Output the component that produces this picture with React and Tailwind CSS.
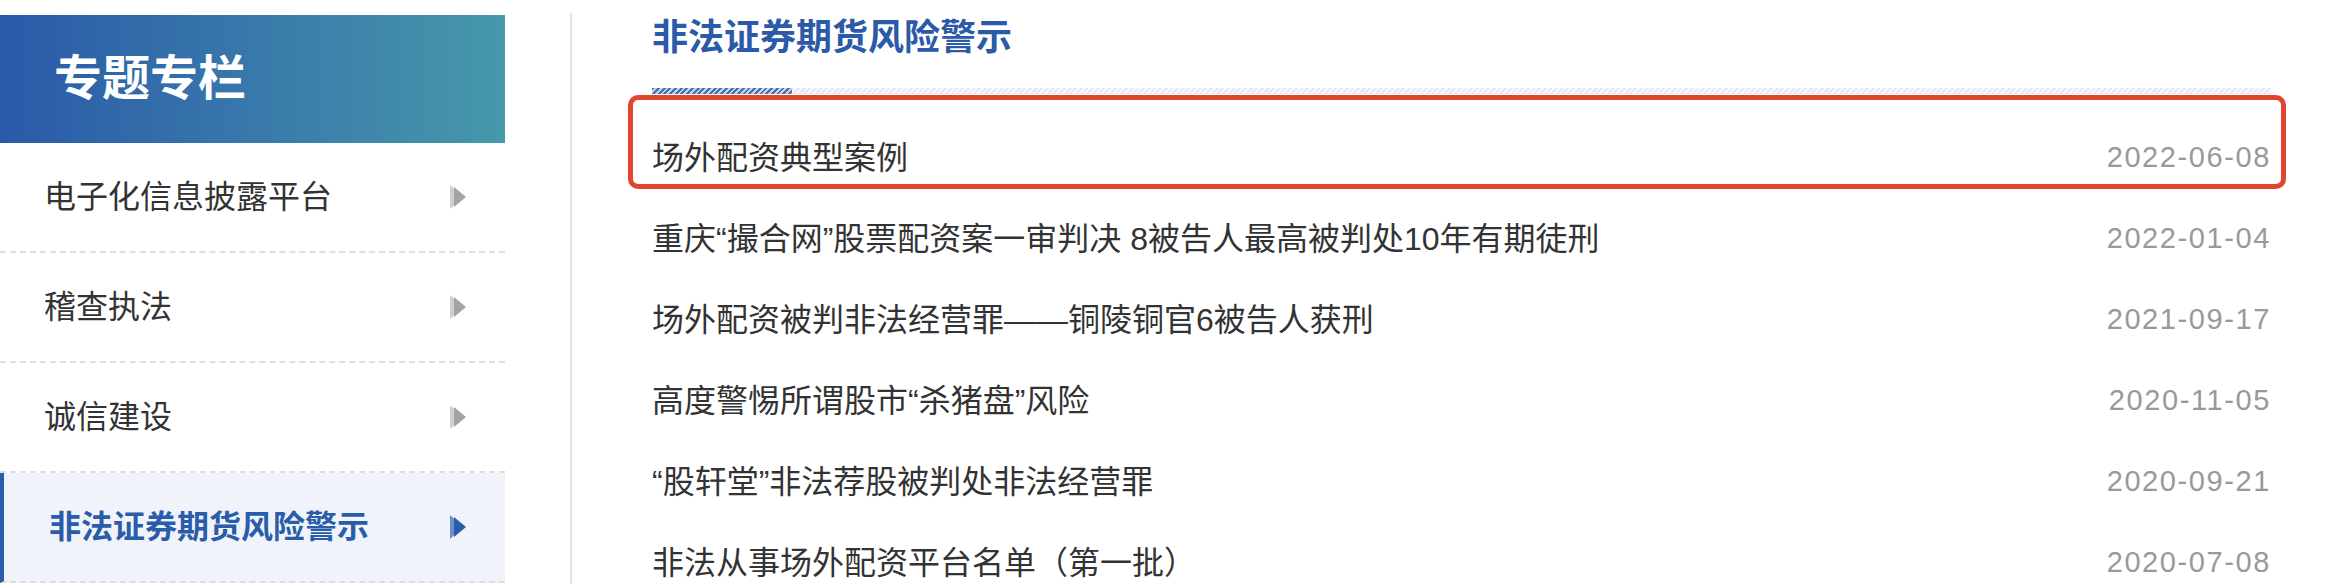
import React from "react";

const FONT = { fontFamily: '"Liberation Sans","Noto Sans CJK SC",sans-serif' };

function Arrow({ active }) {
  const light = active ? "#6a8fcc" : "#cfcfcf";
  const dark = active ? "#2a5caa" : "#a3a3a3";
  return (
    <svg width="16" height="24" viewBox="0 0 16 24" className="shrink-0">
      <polygon points="0,0 13,12 0,24" fill={light} />
      <polygon points="4,2 16,12 4,22" fill={dark} />
    </svg>
  );
}

const menu = [
  { label: "电子化信息披露平台" },
  { label: "稽查执法" },
  { label: "诚信建设" },
  { label: "非法证券期货风险警示", active: true },
];

const rows = [
  ["场外配资典型案例", "2022-06-08"],
  ["重庆“撮合网”股票配资案一审判决 8被告人最高被判处10年有期徒刑", "2022-01-04"],
  ["场外配资被判非法经营罪——铜陵铜官6被告人获刑", "2021-09-17"],
  ["高度警惕所谓股市“杀猪盘”风险", "2020-11-05"],
  ["“股轩堂”非法荐股被判处非法经营罪", "2020-09-21"],
  ["非法从事场外配资平台名单（第一批）", "2020-07-08"],
];

export default function App() {
  return (
    <div className="flex h-[584px] w-[2328px] overflow-hidden bg-white" style={FONT}>
      {/* Left column */}
      <div className="w-[505px] shrink-0 pt-[15px]">
        <div className="flex h-[128px] items-center bg-[linear-gradient(90deg,#2a59a9,#4698ab)] pl-[54px]">
          <span className="text-[48px] font-bold leading-none text-white">专题专栏</span>
        </div>
        {menu.map((m) => (
          <div
            key={m.label}
            className={
              m.active
                ? "flex h-[110px] items-center justify-between border-b-2 border-l-4 border-dashed border-b-[#dedede] border-l-[#2a5caa] bg-[#f0f4fa] pl-[45px] pr-[39px]"
                : "flex h-[110px] items-center justify-between border-b-2 border-dashed border-[#dedede] pl-[44px] pr-[39px]"
            }
            style={m.active ? { borderLeftStyle: "solid" } : undefined}
          >
            <span
              className={
                m.active
                  ? "text-[32px] font-bold leading-none text-[#2a5caa]"
                  : "text-[32px] leading-none text-[#333333]"
              }
            >
              {m.label}
            </span>
            <Arrow active={m.active} />
          </div>
        ))}
      </div>

      {/* Divider */}
      <div className="ml-[65px] mt-[13px] w-[2px] shrink-0 bg-[#e3e3e3]" />

      {/* Content */}
      <div className="flex-1 pl-[80px] pr-[57px] pt-[20px]">
        <h2 className="h-[36px] text-[36px] font-bold leading-none text-[#2a5aa8]">非法证券期货风险警示</h2>
        <div className="mt-[32px] flex h-[6px]">
          <div className="w-[140px] bg-[repeating-linear-gradient(135deg,#4a6fae_0_2px,#c4d1e6_2px_4px)]" />
          <div className="flex-1 bg-[repeating-linear-gradient(135deg,#e3e9f2_0_2px,#f7f9fc_2px_4px)]" />
        </div>
        <div className="mt-[23px]">
          {rows.map(([t, d], i) => (
            <div key={i} className="relative flex h-[81px] items-center justify-between">
              <span className="text-[32px] leading-none text-[#333333]">{t}</span>
              <span className="text-[29px] leading-none tracking-[1.6px] text-[#999999]" style={{ fontFamily: '"Liberation Sans",sans-serif' }}>
                {d}
              </span>
              {i === 0 && (
                <div className="pointer-events-none absolute -left-[24px] -right-[15px] -top-[22px] bottom-[9px] rounded-[10px] border-[5px] border-[#e2452f]" />
              )}
            </div>
          ))}
        </div>
      </div>
    </div>
  );
}
